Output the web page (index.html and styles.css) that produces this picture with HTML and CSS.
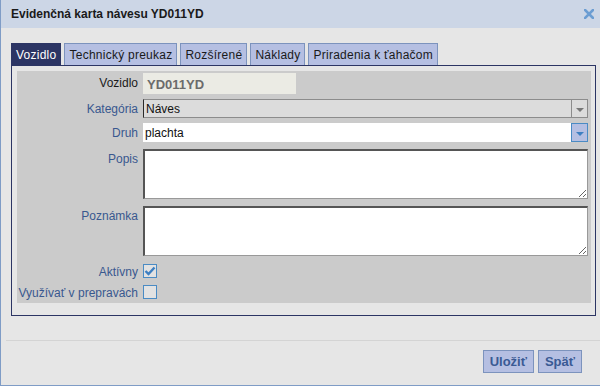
FILE: index.html
```html
<!DOCTYPE html>
<html lang="sk">
<head>
  <meta charset="UTF-8" />
  <meta name="viewport" content="width=device-width, initial-scale=1.0"/>
  <title>Evidenčná karta návesu</title>
  <link rel="stylesheet" href="styles.css">
</head>
<body>
  <div class="dialog">
    <div class="titlebar">
      <span class="title">Evidenčná karta návesu YD011YD</span>
      <svg class="close" width="10" height="10" viewBox="0 0 10 10">
        <path d="M1 1 L9 9 M9 1 L1 9" stroke="#6b9dd2" stroke-width="2.6" stroke-linecap="square"/>
      </svg>
    </div>

    <div class="content">
      <div class="tabs">
        <div class="tab active">Vozidlo</div>
        <div class="tab">Technický preukaz</div>
        <div class="tab">Rozšírené</div>
        <div class="tab">Náklady</div>
        <div class="tab">Priradenia k ťahačom</div>
      </div>

      <div class="panel">
        <div class="form">
          <div class="row row-code">
            <label class="plain">Vozidlo</label>
            <div class="code">YD011YD</div>
          </div>
          <div class="row row-select">
            <label>Kategória</label>
            <div class="select disabled">
              <span class="value">Náves</span>
              <span class="arrow"><i></i></span>
            </div>
          </div>
          <div class="row row-combo">
            <label>Druh</label>
            <div class="combo">
              <span class="value">plachta</span>
              <span class="arrow"><i></i></span>
            </div>
          </div>
          <div class="row row-area">
            <label>Popis</label>
            <textarea></textarea>
          </div>
          <div class="row row-area">
            <label>Poznámka</label>
            <textarea></textarea>
          </div>
          <div class="row row-check">
            <label>Aktívny</label>
            <span class="check on">
              <svg width="12" height="10" viewBox="0 0 12 10">
                <path d="M1.5 5 L4.5 8 L10.5 1.5" fill="none" stroke="#3d7fc2" stroke-width="2.4"/>
              </svg>
            </span>
          </div>
          <div class="row row-check">
            <label>Využívať v prepravách</label>
            <span class="check"></span>
          </div>
        </div>
      </div>
    </div>

    <div class="footer">
      <button class="btn">Uložiť</button>
      <button class="btn">Späť</button>
    </div>
  </div>
</body>
</html>
```

FILE: styles.css
```css
* {
  box-sizing: border-box;
}

body {
  margin: 0;
  font-family: "Liberation Sans", Arial, sans-serif;
  font-size: 12px;
}

.dialog {
  width: 600px;
  height: 386px;
  background: #e6e6e6;
  border-left: 1px solid #7f9cc6;
  border-bottom: 1px solid #7f9cc6;
  display: flex;
  flex-direction: column;
}

.titlebar {
  height: 28px;
  background: #ccd6e6;
  display: flex;
  align-items: center;
  justify-content: space-between;
  padding: 0 6px 0 10px;
}

.title {
  font-weight: bold;
  color: #1a1a1a;
}

.content {
  padding: 15px 4px 0 10px;
}

.tabs {
  display: flex;
  gap: 3px;
}

.tab {
  height: 22px;
  padding: 3px 4px 0 4px;
  background: #b5bfe2;
  border: 1px solid #7c93bd;
  border-bottom: none;
  color: #1a1a1a;
  line-height: 17px;
  letter-spacing: 0.25px;
}

.tab.active {
  background: #2c3564;
  border-color: #2c3564;
  color: #fff;
}

.panel {
  border: 1px solid #2c3564;
  padding: 5px 4px 12px 5px;
}

.form {
  background: #cbcbcb;
  padding: 2px 3px 3px 0;
  display: flex;
  flex-direction: column;
}

.row {
  display: grid;
  grid-template-columns: 121px 1fr;
  column-gap: 5px;
  align-items: start;
}

.row label {
  text-align: right;
  color: #39588f;
  padding-top: 3px;
}

.row label.plain {
  color: #1a1a1a;
}

.row-code {
  height: 21px;
}

.code {
  width: 153px;
  height: 21px;
  background: #ebebe4;
  color: #6b6b6b;
  font-weight: bold;
  font-size: 13px;
  padding: 4px 0 0 4px;
}

.row-select {
  margin-top: 5px;
}

.select {
  height: 19px;
  display: flex;
  background: #dcdcdc;
  border: 1px solid #8c8c8c;
  border-left-color: #2a2a2a;
}

.value {
  flex: 1;
  padding: 2px 0 0 2px;
  color: #111;
}

.select .arrow {
  width: 16px;
  border-left: 1px solid #8c8c8c;
  display: flex;
  align-items: center;
  justify-content: center;
}

.arrow i {
  width: 0;
  height: 0;
  border-left: 4px solid transparent;
  border-right: 4px solid transparent;
  border-top: 4px solid #777;
  margin-top: 2px;
}

.row-combo {
  margin-top: 5px;
}

.combo {
  height: 19px;
  display: flex;
  background: #fff;
}

.combo .value {
  padding: 3px 0 0 2px;
}

.combo .arrow {
  width: 17px;
  background: #b5bfe2;
  border: 1px solid #4a8bc4;
  display: flex;
  align-items: center;
  justify-content: center;
}

.combo .arrow i {
  border-top-color: #3d7fc2;
}

.row-area {
  margin-top: 7px;
}

textarea {
  height: 50px;
  margin: 0;
  background: #fff;
  border: 1px solid #999;
  border-top: 2px solid #555;
  border-left: 2px solid #555;
  resize: both;
  display: block;
  width: 100%;
}

.row-check {
  margin-top: 8px;
}

.row-check + .row-check {
  margin-top: 6px;
}

.row-check label {
  padding-top: 1px;
}

.check {
  width: 14px;
  height: 14px;
  border: 1px solid #4a8bc4;
  background: #e2e2e2;
  display: flex;
  align-items: center;
  justify-content: center;
}

.footer {
  margin: 24px 0 0 5px;
  border-top: 1px solid #d4d4d4;
  padding: 9px 18px 0 0;
  display: flex;
  justify-content: flex-end;
  gap: 4px;
}

.btn {
  height: 23px;
  padding: 0 6px;
  background: #b5bfe2;
  border: 1px solid #7c93bd;
  color: #3a5a94;
  font-family: "Liberation Sans", Arial, sans-serif;
  font-weight: bold;
  font-size: 13px;
}
```
